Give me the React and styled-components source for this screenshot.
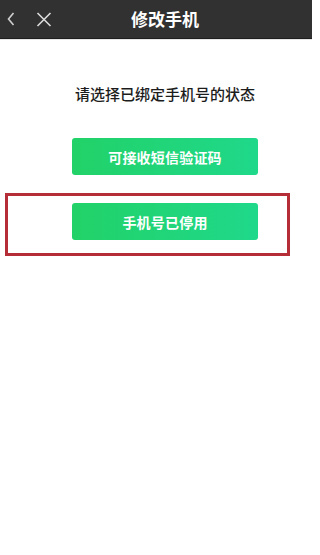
import React from "react";
import styled, { createGlobalStyle } from "styled-components";

const GlobalStyle = createGlobalStyle`
  html, body {
    margin: 0;
    padding: 0;
    background: #fff;
  }
  body {
    font-family: "Noto Sans CJK SC", "Noto Sans", sans-serif;
  }
`;

const Page = styled.div`
  width: 312px;
  height: 555px;
  background: #fff;
  display: flex;
  flex-direction: column;
  overflow: hidden;
`;

const Header = styled.div`
  height: 38px;
  background: #313131;
  border-bottom: 1px solid #1e1e1e;
  box-shadow: 0 1px 0 #e6e6e6;
  display: flex;
  align-items: center;
  position: relative;
`;

const IconButton = styled.span`
  display: flex;
  align-items: center;
  justify-content: center;
  width: ${(p) => p.w}px;
  margin-left: ${(p) => p.ml}px;
  height: 38px;
`;

const Title = styled.div`
  position: absolute;
  left: 18px;
  right: 0;
  top: 0;
  height: 38px;
  line-height: 38px;
  text-align: center;
  color: #fff;
  font-size: 17px;
  font-weight: 700;
  pointer-events: none;
`;

const Main = styled.div`
  display: flex;
  flex-direction: column;
  align-items: flex-start;
`;

const Prompt = styled.div`
  align-self: stretch;
  margin-top: 45px;
  padding-left: 18px;
  text-align: center;
  font-size: 15px;
  line-height: 20px;
  font-weight: 500;
  color: #1c1c1c;
`;

const GreenButton = styled.button`
  width: 186px;
  height: 37px;
  margin-left: ${(p) => p.ml || 0}px;
  margin-top: ${(p) => p.mt || 0}px;
  border: none;
  border-radius: 3px;
  background: linear-gradient(90deg, #22d268 0%, #1fd88a 100%);
  color: #fff;
  font-family: inherit;
  font-size: 14px;
  font-weight: 700;
  letter-spacing: 0.2px;
  padding: 0;
  cursor: pointer;
`;

const HighlightFrame = styled.div`
  box-sizing: border-box;
  margin-left: 5px;
  margin-top: 18px;
  width: 285px;
  padding: 7px 0 13px 64px;
  border: 3px solid #b52d37;
  display: flex;
`;

const App = () => {
  return (
    <>
      <GlobalStyle />
      <Page>
        <Header>
          <IconButton w={14} ml={4}>
            <svg width="8" height="14" viewBox="0 0 8 14">
              <path d="M6.5 1 L1.5 7 L6.5 13" fill="none" stroke="#cfcfcf" strokeWidth="1.6" />
            </svg>
          </IconButton>
          <IconButton w={18} ml={17}>
            <svg width="16" height="15" viewBox="0 0 16 15">
              <path d="M1.5 1 L14.5 14 M14.5 1 L1.5 14" fill="none" stroke="#dcdcdc" strokeWidth="1.6" />
            </svg>
          </IconButton>
          <Title>修改手机</Title>
        </Header>
        <Main>
          <Prompt>请选择已绑定手机号的状态</Prompt>
          <GreenButton ml={72} mt={34}>
            可接收短信验证码
          </GreenButton>
          <HighlightFrame>
            <GreenButton>手机号已停用</GreenButton>
          </HighlightFrame>
        </Main>
      </Page>
    </>
  );
};

export default App;
